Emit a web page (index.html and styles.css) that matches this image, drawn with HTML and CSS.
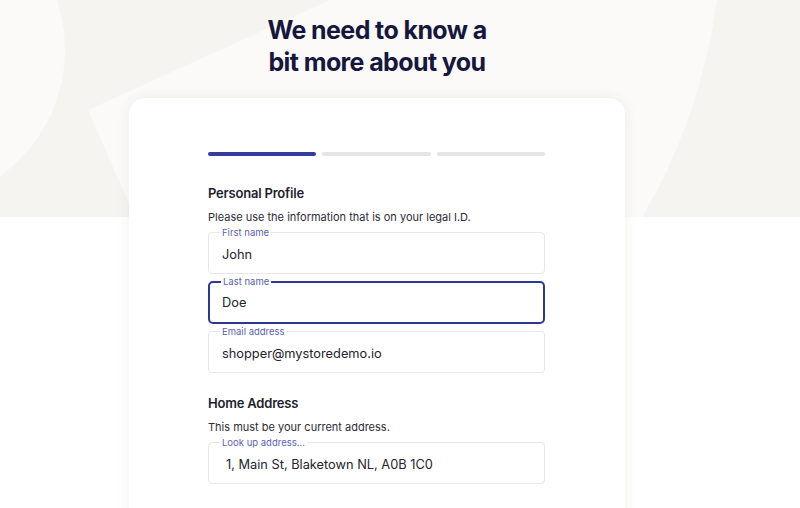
FILE: index.html
```html
<!DOCTYPE html>
<html lang="en">
<head>
    <meta charset="UTF-8">
    <title>Personal Profile</title>
    <link rel="stylesheet" href="styles.css">
</head>
<body>
    <div class="backdrop">
        <svg width="800" height="217" viewBox="0 0 800 217">
            <circle cx="-90" cy="50" r="155" fill="#fbfaf8"/>
            <path d="M88 110 L330 0 L717 0 Q700 120 642 217 L135 217 Z" fill="#fbfaf8"/>
            <circle cx="930" cy="300" r="150" fill="#fbfaf8"/>
        </svg>
    </div>
    <div class="page">
        <h1>We need to know a<br>bit more about you</h1>
        <div class="card">
            <div class="steps">
                <span class="step active"></span>
                <span class="step"></span>
                <span class="step"></span>
            </div>

            <h2>Personal Profile</h2>
            <p class="hint">Please use the information that is on your legal I.D.</p>
            <fieldset class="field">
                <legend>First name</legend>
                <input type="text" value="John">
            </fieldset>
            <fieldset class="field focused">
                <legend>Last name</legend>
                <input type="text" value="Doe">
            </fieldset>
            <fieldset class="field">
                <legend>Email address</legend>
                <input type="text" value="shopper@mystoredemo.io">
            </fieldset>

            <h2 class="section">Home Address</h2>
            <p class="hint">This must be your current address.</p>
            <fieldset class="field">
                <legend>Look up address...</legend>
                <input type="text" class="address" value="1, Main St, Blaketown NL, A0B 1C0">
            </fieldset>
        </div>
    </div>
</body>
</html>
```

FILE: styles.css
```css
body {
    margin: 0;
    font-family: Inter, "Liberation Sans", Arial, sans-serif;
    background: #ffffff;
    color: #22222e;
    overflow: hidden;
}
.backdrop {
    position: absolute;
    top: 0;
    left: 0;
    width: 100%;
    height: 217px;
    background: #f6f4f0;
    z-index: 0;
}
.backdrop svg {
    display: block;
}
.page {
    position: relative;
    z-index: 1;
    width: 496px;
    margin: 0 auto;
    padding-right: 46px;
    padding-top: 14px;
}
h1 {
    margin: 0;
    text-align: center;
    font-size: 25px;
    line-height: 32px;
    font-weight: 700;
    letter-spacing: -0.6px;
    color: #17173d;
}
.card {
    margin-top: 20px;
    background: #ffffff;
    border-radius: 16px;
    box-shadow: 0 0 14px rgba(60, 50, 30, 0.07);
    padding: 54px 80px 60px 79px;
}
.steps {
    display: flex;
    gap: 6px;
}
.step {
    flex: 1;
    height: 4px;
    border-radius: 2px;
    background: #e5e5e7;
}
.step.active {
    background: #363c9c;
}
h2 {
    margin: 29px 0 0;
    font-size: 13px;
    line-height: 16px;
    font-weight: 600;
    color: #1e1e2c;
    letter-spacing: -0.2px;
}
h2.section {
    margin-top: 22px;
}
.hint {
    margin: 9px 0 3px;
    font-size: 11px;
    line-height: 14px;
    color: #2c2c38;
}
.field {
    margin: 0 0 2px;
    padding: 7px 13px 8px;
    border: 1px solid #e7e7ea;
    border-radius: 4px;
    min-width: 0;
}
.field.focused {
    border: 2px solid #2d3896;
    padding: 6px 12px 9px;
    border-radius: 5px;
}
.field legend {
    padding: 0 2px;
    margin-left: -2px;
    font-size: 9.5px;
    line-height: 11px;
    color: #5a5fb5;
}
.field.focused legend {
    margin-left: -1px;
}
.field input {
    display: block;
    width: 100%;
    box-sizing: border-box;
    border: none;
    outline: none;
    padding: 0;
    height: 20px;
    line-height: 20px;
    font-family: Inter, "Liberation Sans", Arial, sans-serif;
    font-size: 12.8px;
    color: #23232c;
    background: transparent;
}
.field input.address {
    padding-left: 4px;
}
```
